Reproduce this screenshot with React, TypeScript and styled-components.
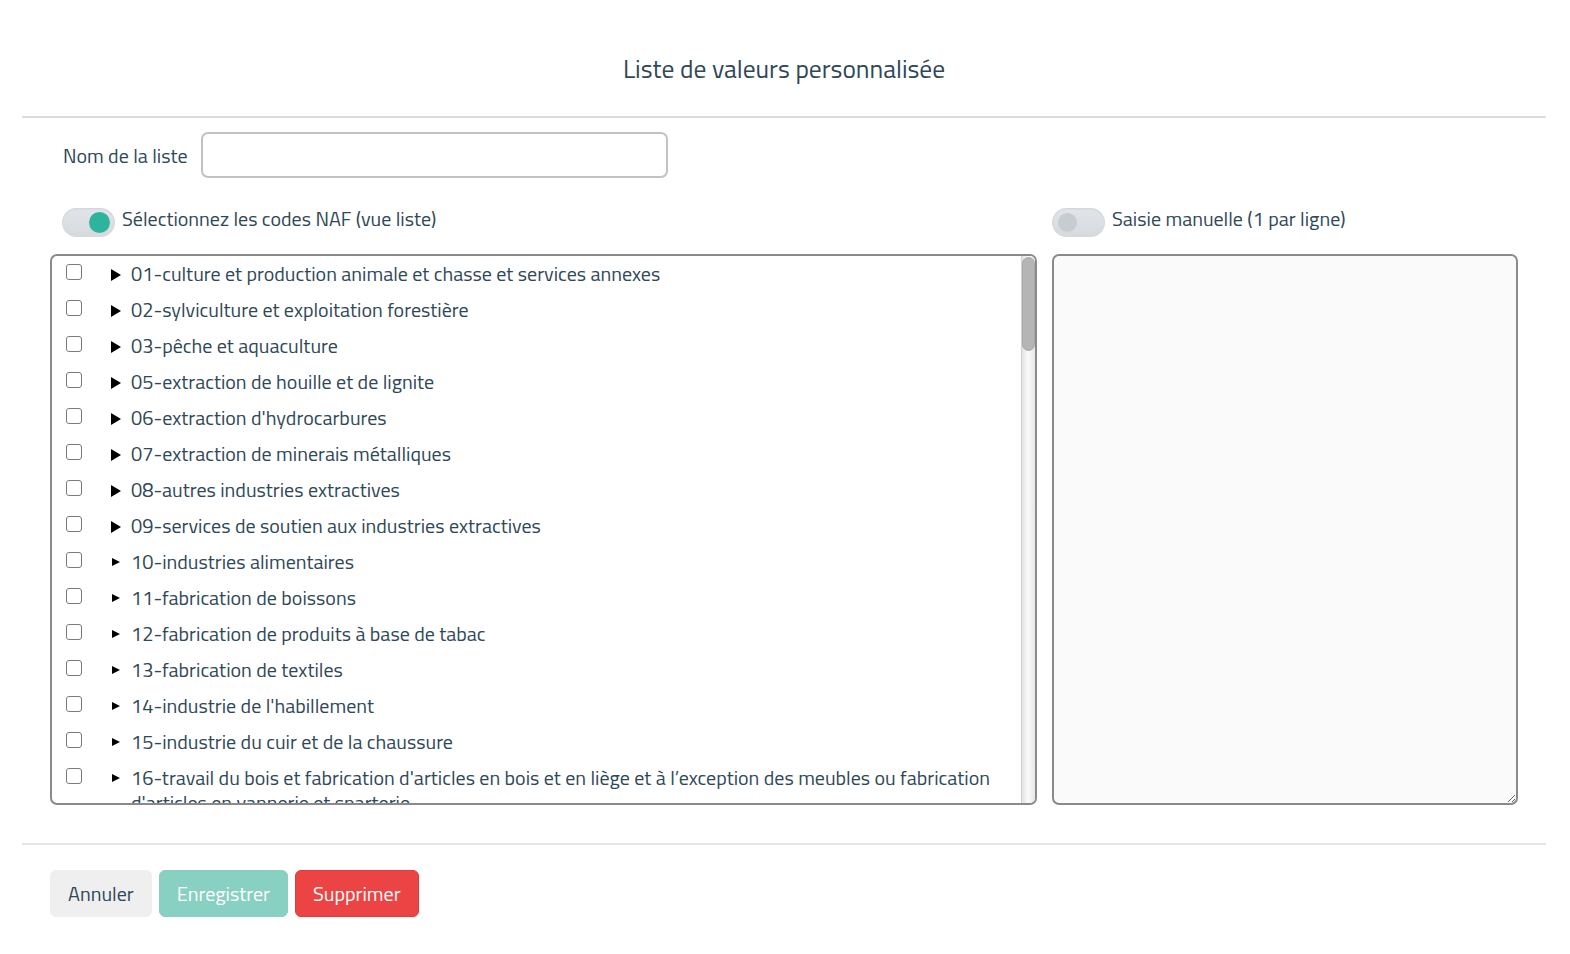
import React from "react";
import styled, { createGlobalStyle } from "styled-components";

const Global = createGlobalStyle`
  html, body { margin: 0; padding: 0; background: #fff; }
  body { font-family: "Titillium Web", Lato, "Noto Sans", sans-serif; color: #2f4654; }
  * { box-sizing: border-box; }
`;

const Page = styled.div`
  width: 1570px;
  height: 954px;
  background: #fff;
  display: flex;
  flex-direction: column;
`;

const Header = styled.div`
  height: 118px;
  margin: 0 24px 0 22px;
  border-bottom: 2px solid #dadde0;
  display: flex;
  align-items: center;
  justify-content: center;
  padding-top: 20px;
`;

const Title = styled.h1`
  margin: 0;
  font-size: 25.5px;
  font-weight: 400;
  color: #2f4858;
`;

const Body = styled.div`
  padding: 14px 52px 0 50px;
  display: flex;
  flex-direction: column;
  height: 725px;
`;

const NameRow = styled.div`
  display: flex;
  align-items: center;
  gap: 13px;
  padding-left: 13px;
`;

const Label = styled.label`
  font-size: 20px;
  color: #2f4858;
`;

const TextInput = styled.input`
  width: 467px;
  height: 46px;
  border: 2px solid #c2c2c2;
  border-radius: 7px;
  outline: none;
  font-size: 18px;
  padding: 0 12px;
`;

const Columns = styled.div`
  display: grid;
  grid-template-columns: 987px 466px;
  column-gap: 15px;
  margin-top: 26px;
`;

const Column = styled.div`
  display: flex;
  flex-direction: column;
`;

const ToggleRow = styled.div<{ $indent: number }>`
  display: flex;
  align-items: center;
  gap: 7px;
  padding-left: ${(p) => p.$indent}px;
  height: 30px;
  margin-bottom: 20px;
`;

const Track = styled.span`
  position: relative;
  display: inline-block;
  width: 53px;
  height: 29px;
  border-radius: 15px;
  background: linear-gradient(#e1e4e8, #d6dade);
  box-shadow: inset 0 1px 2px rgba(0, 0, 0, 0.08);
  flex-shrink: 0;
  margin-top: 6px;
`;

const Knob = styled.span<{ $on: boolean }>`
  position: absolute;
  top: ${(p) => (p.$on ? 4 : 5)}px;
  ${(p) => (p.$on ? "right: 5px;" : "left: 6px;")}
  width: ${(p) => (p.$on ? 21 : 19)}px;
  height: ${(p) => (p.$on ? 21 : 19)}px;
  border-radius: 50%;
  background: ${(p) => (p.$on ? "#2db49d" : "#c7ccd0")};
`;

const ToggleText = styled.span`
  font-size: 20px;
  color: #2f4858;
  margin-top: -2px;
`;

const ListWrap = styled.div`
  position: relative;
  height: 551px;
  border: 2px solid #8a8a8a;
  border-radius: 7px;
  overflow: hidden;
`;

const ListBox = styled.div`
  height: 100%;
  overflow: hidden;
  padding: 0 20px 0 13px;
`;

const ScrollTrack = styled.div`
  position: absolute;
  top: 0;
  right: 0;
  bottom: 0;
  width: 14px;
  background: linear-gradient(90deg, #e2e2e2, #fbfbfb 45%, #e6e6e6);
  border-left: 1px solid #d0d0d0;
`;

const ScrollThumb = styled.div`
  margin: 1px 0 0 0;
  width: 13px;
  height: 94px;
  border-radius: 7px;
  background: #b5b5b5;
  border: 1px solid #a9a9a9;
`;

const Row = styled.div`
  display: flex;
  align-items: flex-start;
  min-height: 36px;
  padding-top: 5px;
`;

const Check = styled.input.attrs({ type: "checkbox" })`
  appearance: none;
  -webkit-appearance: none;
  width: 16px;
  height: 16px;
  margin: 3px 0 0 1px;
  border: 1.5px solid #7a7a7a;
  border-radius: 3px;
  background: #fff;
  flex-shrink: 0;
`;

const Caret = styled.span<{ $big: boolean }>`
  width: 0;
  height: 0;
  flex-shrink: 0;
  margin-left: ${(p) => (p.$big ? 29 : 30)}px;
  margin-top: ${(p) => (p.$big ? 8 : 9)}px;
  margin-right: ${(p) => (p.$big ? 10 : 11)}px;
  border-top: ${(p) => (p.$big ? 6 : 4.5)}px solid transparent;
  border-bottom: ${(p) => (p.$big ? 6 : 4.5)}px solid transparent;
  border-left: ${(p) => (p.$big ? 10 : 8)}px solid #000;
`;

const ItemText = styled.span`
  font-size: 20px;
  line-height: 25px;
  color: #2f4858;
  max-width: 880px;
`;

const TextArea = styled.textarea`
  height: 551px;
  border: 2px solid #8a8a8a;
  border-radius: 7px;
  background: #fafafa;
  resize: vertical;
  outline: none;
  font-family: inherit;
  font-size: 18px;
  padding: 8px;
`;

const Footer = styled.div`
  margin: 0 24px 0 22px;
  border-top: 2px solid #e3e5e7;
  padding: 25px 0 0 28px;
  display: flex;
  gap: 7px;
`;

const Button = styled.button<{ $variant: "plain" | "save" | "danger" }>`
  height: 47px;
  padding: 0 17px;
  border-radius: 6px;
  font-family: inherit;
  font-size: 20px;
  cursor: pointer;
  border: 1px solid
    ${(p) => (p.$variant === "danger" ? "#e03a3a" : p.$variant === "save" ? "#88d0c1" : "#efefef")};
  background: ${(p) => (p.$variant === "danger" ? "#ec4444" : p.$variant === "save" ? "#88d0c1" : "#efefef")};
  color: ${(p) => (p.$variant === "plain" ? "#2f4858" : "#fff")};
`;

const items = [
  "01-culture et production animale et chasse et services annexes",
  "02-sylviculture et exploitation forestière",
  "03-pêche et aquaculture",
  "05-extraction de houille et de lignite",
  "06-extraction d'hydrocarbures",
  "07-extraction de minerais métalliques",
  "08-autres industries extractives",
  "09-services de soutien aux industries extractives",
  "10-industries alimentaires",
  "11-fabrication de boissons",
  "12-fabrication de produits à base de tabac",
  "13-fabrication de textiles",
  "14-industrie de l'habillement",
  "15-industrie du cuir et de la chaussure",
  "16-travail du bois et fabrication d'articles en bois et en liège et à l’exception des meubles ou fabrication d'articles en vannerie et sparterie",
  "17-industrie du papier et du carton",
  "18-imprimerie et reproduction d'enregistrements",
  "19-cokéfaction et raffinage",
  "20-industrie chimique",
];

export default function App() {
  return (
    <Page>
      <Global />
      <Header>
        <Title>Liste de valeurs personnalisée</Title>
      </Header>
      <Body>
        <NameRow>
          <Label>Nom de la liste</Label>
          <TextInput />
        </NameRow>
        <Columns>
          <Column>
            <ToggleRow $indent={12}>
              <Track>
                <Knob $on />
              </Track>
              <ToggleText>Sélectionnez les codes NAF (vue liste)</ToggleText>
            </ToggleRow>
            <ListWrap>
              <ListBox>
                {items.map((t, i) => (
                  <Row key={t}>
                    <Check />
                    <Caret $big={i < 8} />
                    <ItemText>{t}</ItemText>
                  </Row>
                ))}
              </ListBox>
              <ScrollTrack>
                <ScrollThumb />
              </ScrollTrack>
            </ListWrap>
          </Column>
          <Column>
            <ToggleRow $indent={0}>
              <Track>
                <Knob $on={false} />
              </Track>
              <ToggleText>Saisie manuelle (1 par ligne)</ToggleText>
            </ToggleRow>
            <TextArea />
          </Column>
        </Columns>
      </Body>
      <Footer>
        <Button $variant="plain">Annuler</Button>
        <Button $variant="save">Enregistrer</Button>
        <Button $variant="danger">Supprimer</Button>
      </Footer>
    </Page>
  );
}
